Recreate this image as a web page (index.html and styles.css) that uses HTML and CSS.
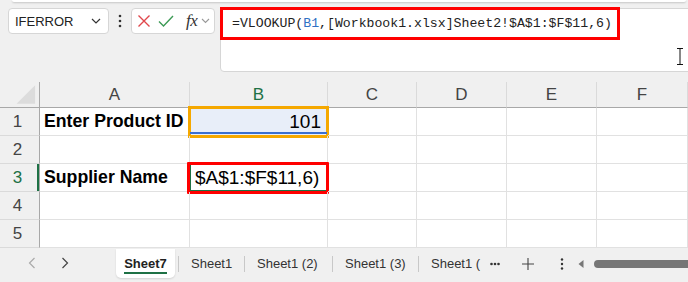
FILE: index.html
```html
<!DOCTYPE html>
<html lang="en">
<head>
  <meta charset="UTF-8">
  <title>Workbook - Sheet7</title>
  <link rel="stylesheet" href="styles.css">
</head>
<body>
  <div class="ribbon-edge"></div>

  <div class="toolbar">
    <div class="namebox">
      <span>IFERROR</span>
      <svg width="10" height="6" viewBox="0 0 10 6"><path d="M1 1l4 4 4-4" fill="none" stroke="#333" stroke-width="1.2"/></svg>
    </div>
    <div class="kebab">
      <svg width="4" height="14" viewBox="0 0 4 14"><circle cx="2" cy="2" r="1.3"/><circle cx="2" cy="7" r="1.3"/><circle cx="2" cy="12" r="1.3"/></svg>
    </div>
    <div class="fbuttons">
      <svg class="btn-x" width="14" height="14" viewBox="0 0 14 14"><path d="M1.5 1.5l11 11M12.5 1.5l-11 11" stroke="#e0474c" stroke-width="1.4"/></svg>
      <svg class="btn-ok" width="16" height="14" viewBox="0 0 16 14"><path d="M1 7.5l4.5 4.5L15 2" fill="none" stroke="#3c9a55" stroke-width="1.4"/></svg>
      <span class="fx">fx</span>
      <svg class="btn-drop" width="9" height="6" viewBox="0 0 9 6"><path d="M1 1l3.5 3.5L8 1" fill="none" stroke="#999" stroke-width="1.1"/></svg>
    </div>
    <div class="formula">
      <div class="formula-line">=VLOOKUP(<span class="ref">B1</span>,[Workbook1.xlsx]Sheet2!$A$1:$F$11,6)</div>
      <svg class="ibeam" width="8" height="17" viewBox="0 0 8 17"><path d="M1 0.5h6M1 16.5h6M4 0.5v16" fill="none" stroke="#111" stroke-width="1"/></svg>
    </div>
  </div>

  <div class="sheet">
    <div class="hd corner"><svg width="40" height="26" viewBox="0 0 40 26"><polygon points="36,3 36,22 17,22" fill="#dcdcdc"/></svg></div>
    <div class="hd col">A</div>
    <div class="hd col active">B</div>
    <div class="hd col">C</div>
    <div class="hd col">D</div>
    <div class="hd col">E</div>
    <div class="hd col">F</div>

    <div class="hd row">1</div>
    <div class="cell bold">Enter Product ID</div>
    <div class="cell num picked"><span class="ref-box"></span>101</div>
    <div class="cell"></div><div class="cell"></div><div class="cell"></div><div class="cell"></div>

    <div class="hd row">2</div>
    <div class="cell"></div><div class="cell"></div><div class="cell"></div><div class="cell"></div><div class="cell"></div><div class="cell"></div>

    <div class="hd row active">3</div>
    <div class="cell bold">Supplier Name</div>
    <div class="cell editing"><span class="mark"></span>$A$1:$F$11,6)</div>
    <div class="cell"></div><div class="cell"></div><div class="cell"></div><div class="cell"></div>

    <div class="hd row">4</div>
    <div class="cell"></div><div class="cell"></div><div class="cell"></div><div class="cell"></div><div class="cell"></div><div class="cell"></div>

    <div class="hd row">5</div>
    <div class="cell"></div><div class="cell"></div><div class="cell"></div><div class="cell"></div><div class="cell"></div><div class="cell"></div>
  </div>

  <div class="tabbar">
    <div class="nav">
      <svg width="8" height="12" viewBox="0 0 8 12"><path d="M6.5 1L1.5 6l5 5" fill="none" stroke="#aaa" stroke-width="1.2"/></svg>
      <svg width="8" height="12" viewBox="0 0 8 12"><path d="M1.5 1l5 5-5 5" fill="none" stroke="#444" stroke-width="1.2"/></svg>
    </div>
    <div class="tab current">Sheet7</div>
    <div class="sep"></div>
    <div class="tab w65">Sheet1</div>
    <div class="sep"></div>
    <div class="tab w87">Sheet1 (2)</div>
    <div class="sep"></div>
    <div class="tab w85">Sheet1 (3)</div>
    <div class="sep"></div>
    <div class="tab w70">Sheet1 (</div>
    <div class="more">
      <svg width="10" height="4" viewBox="0 0 10 4"><circle cx="1.5" cy="2" r="1.3"/><circle cx="5" cy="2" r="1.3"/><circle cx="8.5" cy="2" r="1.3"/></svg>
    </div>
    <div class="add">
      <svg width="12" height="12" viewBox="0 0 12 12"><path d="M6 0v12M0 6h12" stroke="#444" stroke-width="1.1"/></svg>
    </div>
    <div class="kebab small">
      <svg width="4" height="12" viewBox="0 0 4 12"><circle cx="2" cy="1.5" r="1.2"/><circle cx="2" cy="6" r="1.2"/><circle cx="2" cy="10.5" r="1.2"/></svg>
    </div>
    <div class="hscroll">
      <svg width="6" height="8" viewBox="0 0 6 8"><polygon points="5.5,0 5.5,8 0.5,4" fill="#777"/></svg>
      <div class="thumb"></div>
    </div>
  </div>
</body>
</html>
```

FILE: styles.css
```css
body {
  margin: 0;
  background-color: #f0f0f0;
  font-family: "Liberation Sans", Arial, sans-serif;
  color: #222;
  width: 688px;
  height: 282px;
  overflow: hidden;
}

.ribbon-edge {
  height: 2px;
  margin: 0 2px 0 12px;
  background: white;
  box-shadow: 0 1px 2px rgba(0, 0, 0, 0.18);
  border-radius: 0 0 4px 4px;
}

/* formula bar row */
.toolbar {
  display: flex;
  align-items: flex-start;
  margin-top: 6px;
  padding-left: 8px;
  height: 64px;
}
.namebox {
  box-sizing: border-box;
  width: 101px;
  height: 26px;
  background: white;
  border: 1px solid #d6d6d6;
  border-radius: 4px;
  display: flex;
  align-items: center;
  justify-content: space-between;
  padding: 0 7px 0 6px;
  font-size: 13px;
  color: #222;
}
.kebab {
  width: 22px;
  height: 26px;
  display: flex;
  align-items: center;
  justify-content: center;
  fill: #333;
}
.fbuttons {
  box-sizing: border-box;
  width: 84px;
  height: 26px;
  background: white;
  border: 1px solid #d6d6d6;
  border-radius: 4px;
  display: flex;
  align-items: center;
}
.btn-x { margin-left: 5px; }
.btn-ok { margin-left: 7px; }
.fbuttons .fx {
  font-family: "Liberation Serif", serif;
  font-style: italic;
  font-size: 17px;
  color: #333;
  margin-left: 12px;
  letter-spacing: -0.5px;
}
.btn-drop { margin-left: 4px; }
.formula {
  position: relative;
  box-sizing: border-box;
  flex: 1;
  height: 64px;
  margin-left: 5px;
  margin-right: -6px;
  background: white;
  border: 1px solid #d6d6d6;
  border-radius: 4px;
}
.formula-line {
  box-sizing: border-box;
  width: 400px;
  height: 33px;
  margin: -2px 0 0 -1px;
  border: 3px solid #ff0000;
  padding-left: 9px;
  font-family: "Liberation Mono", "DejaVu Sans Mono", monospace;
  font-size: 13.2px;
  line-height: 27px;
  color: #222;
  white-space: nowrap;
}
.formula-line .ref { color: #2f70c4; }
.ibeam {
  position: absolute;
  left: 455px;
  top: 39px;
}

/* grid */
.sheet {
  display: grid;
  grid-template-columns: 40px 150px 138px 89px 90px 90px 91px;
  grid-template-rows: 26px repeat(5, 28px);
  margin-top: 10px;
  background: white;
}
.hd {
  box-sizing: border-box;
  background: #f0f0f0;
  color: #444;
  font-size: 17px;
  display: flex;
  align-items: center;
  justify-content: center;
}
.hd.col {
  border-right: 1px solid #dadada;
  border-bottom: 1px solid #a8a8a8;
}
.hd.col.active { color: #1e7145; }
.hd.corner {
  border-right: 1px solid #a8a8a8;
  border-bottom: 1px solid #a8a8a8;
}
.hd.row {
  border-right: 1px solid #a8a8a8;
  border-bottom: 1px solid #dadada;
  padding-right: 4px;
}
.hd.row.active {
  color: #1e7145;
  box-shadow: inset -2px 0 0 #1e7145;
}
.cell {
  position: relative;
  box-sizing: border-box;
  border-right: 1px solid #e1e1e1;
  border-bottom: 1px solid #e1e1e1;
  font-size: 16px;
  color: #000;
  display: flex;
  align-items: center;
  padding: 0 4px;
  white-space: nowrap;
}
.cell.bold {
  font-weight: bold;
  font-size: 17.7px;
}
.cell.num {
  justify-content: flex-end;
  font-size: 19px;
  padding-right: 6px;
}
.cell.picked { background: #e8eef9; }
.ref-box {
  position: absolute;
  top: -2px;
  left: -2px;
  right: -2px;
  bottom: -3px;
  border: 3px solid #f5a800;
}
.ref-box::after {
  content: "";
  position: absolute;
  left: -1px;
  right: -1px;
  bottom: 1px;
  height: 2px;
  background: #3b6fd0;
  border-left: 3px solid #3b6fd0;
  border-right: 3px solid #3b6fd0;
}
.cell.editing {
  font-size: 19px;
  padding-left: 5px;
  box-shadow: inset 0 0 0 1px #1e7145;
}
.mark {
  position: absolute;
  top: -2px;
  left: -3px;
  right: -2px;
  bottom: -3px;
  border: 3px solid #ff0000;
  border-radius: 1px;
}

/* sheet tabs */
.tabbar {
  display: flex;
  align-items: flex-start;
  height: 33px;
  margin-top: 1px;
  font-size: 13px;
  color: #333;
}
.nav {
  width: 116px;
  height: 28px;
  display: flex;
  align-items: center;
  gap: 25px;
  padding-left: 28px;
  box-sizing: border-box;
}
.tab {
  box-sizing: border-box;
  height: 29px;
  line-height: 29px;
  padding: 0 0 0 12px;
  white-space: nowrap;
  overflow: hidden;
}
.tab.w65 { width: 65px; }
.tab.w87 { width: 87px; }
.tab.w85 { width: 85px; }
.tab.w70 { width: 71px; }
.tab.current {
  width: 59px;
  padding: 0;
  text-align: center;
  background: white;
  font-weight: bold;
  color: #222;
  border-radius: 0 0 5px 5px;
  box-shadow: 0 1px 2px rgba(0, 0, 0, 0.12);
  position: relative;
  margin-right: 3px;
}
.tab.current::after {
  content: "";
  position: absolute;
  left: 8px;
  right: 8px;
  bottom: 4px;
  height: 2px;
  background: #1e7145;
}
.sep {
  width: 1px;
  height: 16px;
  margin-top: 7px;
  background: #c8c8c8;
}
.more {
  height: 29px;
  display: flex;
  align-items: center;
  fill: #333;
}
.add {
  height: 29px;
  display: flex;
  align-items: center;
  margin-left: 22px;
}
.kebab.small {
  width: 16px;
  height: 29px;
  margin-left: 20px;
  fill: #333;
}
.hscroll {
  flex: 1;
  height: 29px;
  display: flex;
  align-items: center;
  margin-left: 8px;
  gap: 10px;
}
.thumb {
  flex: 1;
  height: 8px;
  background: #767676;
  border-radius: 4px 0 0 4px;
}
```
